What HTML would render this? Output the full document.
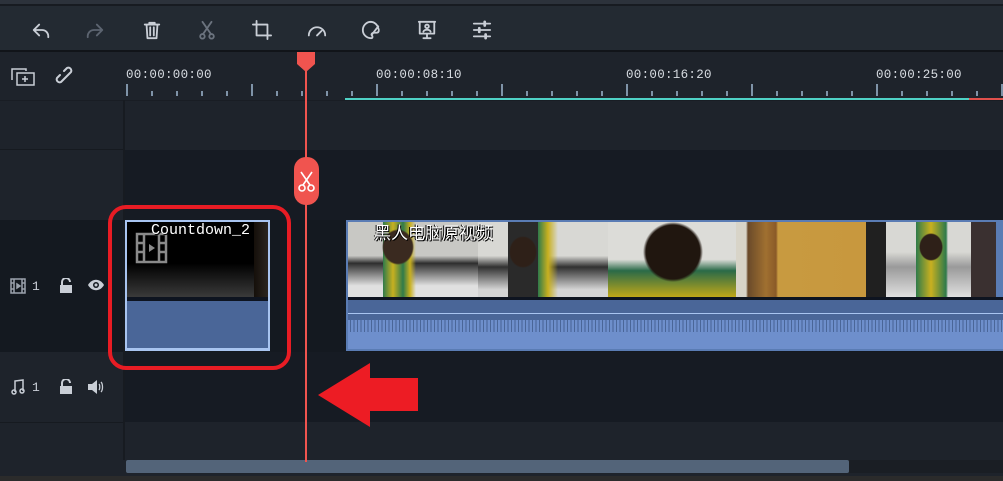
<!DOCTYPE html>
<html><head><meta charset="utf-8"><style>
*{margin:0;padding:0;box-sizing:border-box}
body{width:1003px;height:481px;overflow:hidden;background:#1e232b;position:relative;font-family:"Liberation Mono","Noto Sans CJK SC",monospace}
.a{position:absolute}
.tb svg{position:absolute;top:14px;width:20px;height:20px;fill:none;stroke:#c9ced6;stroke-width:2;stroke-linecap:round;stroke-linejoin:round}
.lbl{position:absolute;top:68px;color:#d8dce2;font-size:12.5px;letter-spacing:0.3px}
.tk{position:absolute;width:2px;background:#7f93a8}
.thumb{position:absolute;top:0;height:75px;width:130px}
</style></head><body>
<div class="a" style="left:0;top:0;width:1003px;height:4px;background:#2c323b"></div>
<div class="a" style="left:0;top:4px;width:1003px;height:2px;background:#171b21"></div>
<div class="a tb" style="left:0;top:6px;width:1003px;height:44px;background:#232a32">
<svg style="left:31px" viewBox="0 0 22 22"><path d="M9 5L3 11l6 6M3 11h9c4 0 7 3 7 7v1"/></svg>
<svg style="left:85px;stroke:#5c6470" viewBox="0 0 22 22"><path d="M13 5l6 6-6 6M19 11h-9c-4 0-7 3-7 7v1"/></svg>
<svg style="left:142px" viewBox="0 0 22 22"><path d="M3 5h16M8 5V3h6v2M5 5l1 15h10l1-15M9 8v9M13 8v9"/></svg>
<svg style="left:197px;stroke:#6b737e" viewBox="0 0 22 22"><path d="M6 2l9 13M16 2L7 15"/><circle cx="6" cy="18" r="2.5"/><circle cx="16" cy="18" r="2.5"/></svg>
<svg style="left:252px" viewBox="0 0 22 22"><path d="M5 1v16h16M1 5h16v16"/></svg>
<svg style="left:307px" viewBox="0 0 22 22"><path d="M2 17a9 9 0 0 1 18 0M11 17l5-5"/></svg>
<svg style="left:361px" viewBox="0 0 22 22"><path d="M11 2a9 9 0 1 0 0 18c2 0 2-2 1-3s0-3 2-3h3c3 0 3-3 2-5A9 9 0 0 0 11 2z"/><path d="M12 16l7-9"/></svg>
<svg style="left:417px" viewBox="0 0 22 22"><path d="M2 2h18M3 2v13h16V2M11 15v5M7 20h8"/><circle cx="11" cy="7" r="2"/><path d="M7 13c1-3 7-3 8 0"/></svg>
<svg style="left:472px" viewBox="0 0 22 22"><path d="M2 4h18M2 11h18M2 18h18"/><path d="M14 2v4M8 9v4M15 16v4" stroke-width="3"/></svg>
</div>
<div class="a" style="left:0;top:50px;width:1003px;height:2px;background:#111419"></div>
<svg class="a" style="left:11px;top:66px" width="26" height="22" viewBox="0 0 26 22" fill="none" stroke="#c9ced6" stroke-width="1.5"><path d="M1 14V3h14v2"/><rect x="6" y="7" width="17" height="12"/><path d="M14 10v6M11 13h6"/></svg>
<svg class="a" style="left:55px;top:66px" width="22" height="22" viewBox="0 0 22 22" fill="none" stroke="#c9ced6" stroke-width="2" stroke-linecap="round"><path d="M9 13l-3 3a3 3 0 0 1-4-4l3-3M13 9l3-3a3 3 0 0 0-4-4l-3 3M8 14l6-6"/></svg>
<div class="lbl" style="left:126px">00:00:00:00</div>
<div class="lbl" style="left:376px">00:00:08:10</div>
<div class="lbl" style="left:626px">00:00:16:20</div>
<div class="lbl" style="left:876px">00:00:25:00</div>
<div id="ticks"></div>
<div class="a" style="left:345px;top:98px;width:658px;height:3px;background:#4fd1c5"></div>
<div class="a" style="left:969px;top:98px;width:34px;height:2px;background:#e0504c"></div>
<div class="a" style="left:0;top:100px;width:1003px;height:1px;background:#191d24"></div>
<div class="a" style="left:0;top:149px;width:124px;height:1px;background:#161a20"></div>
<div class="a" style="left:124px;top:150px;width:879px;height:70px;background:#161b23"></div>
<div class="a" style="left:0;top:220px;width:1003px;height:132px;background:#141920"></div>
<div class="a" style="left:124px;top:352px;width:879px;height:70px;background:#161b23"></div>
<div class="a" style="left:0;top:422px;width:124px;height:1px;background:#161a20"></div>
<div class="a" style="left:123px;top:100px;width:2px;height:360px;background:#171b21"></div>
<svg class="a" style="left:10px;top:278px" width="16" height="16" viewBox="0 0 16 16" fill="none" stroke="#9ba3ad" stroke-width="1.5"><rect x="1" y="1" width="14" height="14"/><path d="M4 1v14M12 1v14M1 5h3M1 11h3M12 5h3M12 11h3"/><path d="M7 6l3 2-3 2z" fill="#9ba3ad"/></svg>
<div class="a" style="left:32px;top:279px;color:#c9ced6;font-size:13px">1</div>
<svg class="a" style="left:59px;top:278px" width="14" height="16" viewBox="0 0 14 16"><path d="M3 7V4a4 4 0 0 1 8 0" fill="none" stroke="#c9ced6" stroke-width="2"/><rect x="1" y="7" width="12" height="8" fill="#c9ced6"/></svg>
<svg class="a" style="left:87px;top:279px" width="18" height="12" viewBox="0 0 18 12"><path d="M1 6c4-7 12-7 16 0-4 7-12 7-16 0z" fill="#c9ced6"/><circle cx="9" cy="6" r="3" fill="#141920"/><circle cx="9" cy="6" r="1.5" fill="#c9ced6"/></svg>
<svg class="a" style="left:11px;top:379px" width="14" height="16" viewBox="0 0 14 16" fill="none" stroke="#c9ced6" stroke-width="1.5"><path d="M4 13V2l8-1v11"/><circle cx="3" cy="13" r="2"/><circle cx="11" cy="12" r="2"/></svg>
<div class="a" style="left:32px;top:380px;color:#c9ced6;font-size:13px">1</div>
<svg class="a" style="left:59px;top:379px" width="14" height="16" viewBox="0 0 14 16"><path d="M3 7V4a4 4 0 0 1 8 0" fill="none" stroke="#c9ced6" stroke-width="2"/><rect x="1" y="7" width="12" height="8" fill="#c9ced6"/></svg>
<svg class="a" style="left:87px;top:379px" width="18" height="16" viewBox="0 0 18 16"><path d="M1 5h4l5-4v14l-5-4H1z" fill="#c9ced6"/><path d="M12 5c1 1 1 5 0 6M14 3c2 2 2 8 0 10" fill="none" stroke="#c9ced6" stroke-width="1.3"/></svg>
<div class="a" style="left:125px;top:220px;width:145px;height:131px;background:#a8c4f0"></div>
<div class="a" style="left:127px;top:222px;width:141px;height:75px;background:linear-gradient(#000 55%,#3a3a3a)"></div>
<div class="a" style="left:254px;top:222px;width:14px;height:75px;background:linear-gradient(90deg,#150f0a,#2a2520)"></div>
<div class="a" style="left:127px;top:297px;width:141px;height:4px;background:#0e1420"></div>
<div class="a" style="left:127px;top:301px;width:141px;height:47px;background:#4a6698"></div>
<svg class="a" style="left:135px;top:232px" width="33" height="32" viewBox="0 0 33 32" fill="none" stroke="#8a8a8a" stroke-width="2.5"><rect x="2" y="2" width="29" height="28"/><path d="M9 2v28M24 2v28M2 11h7M2 20h7M24 11h7M24 20h7"/><path d="M14 12l6 4-6 4z" fill="#8a8a8a" stroke="none"/></svg>
<div class="a" style="left:151px;top:222px;color:#fff;font-size:15px;text-shadow:1px 1px 0 #000">Countdown_2</div>
<div class="a" style="left:346px;top:220px;width:657px;height:131px;background:#5a7cb4"></div>
<div class="a" style="left:348px;top:222px;width:655px;height:75px;overflow:hidden">
 <div class="thumb" style="left:0;background:radial-gradient(ellipse 16px 18px at 50px 25px,#3a2a20 90%,transparent),linear-gradient(90deg,transparent 35px,#2f7a4a 35px,#c8b020 45px,#2f7a4a 55px,#c8b020 62px,transparent 68px),linear-gradient(#c8c8c4 45%,#2e2e2e 55%,#e0e0e0 85%)"></div>
 <div class="thumb" style="left:130px;background:radial-gradient(ellipse 14px 16px at 45px 30px,#2e2018 90%,transparent),linear-gradient(90deg,transparent 30px,#2a2a2a 30px,#2a2a2a 60px,#2f7a4a 60px,#c8b020 70px,transparent 80px),linear-gradient(#d8d8d4 45%,#303030 60%,#d4d4d4 90%)"></div>
 <div class="thumb" style="left:260px;background:radial-gradient(ellipse 30px 30px at 65px 30px,#20160f 90%,transparent),linear-gradient(#dcdcd8 50%,#2a6a48 65%,#c0a818)"></div>
 <div class="thumb" style="left:388px;background:linear-gradient(90deg,#d8d4c8 0 10px,#6a4a2a 12px,#a07030 30px,#8a5a28 40px,#c89a40 42px,#c8983e 130px)"></div>
 <div class="thumb" style="left:518px;background:radial-gradient(ellipse 12px 14px at 65px 25px,#2e2018 90%,transparent),linear-gradient(90deg,#202020 0 20px,transparent 20px,transparent 50px,#2f7a4a 50px,#c8b020 65px,#2f7a4a 80px,transparent 82px,transparent 105px,#3a3030 105px),linear-gradient(#d8d8d4 40%,#9a9a9a 60%,#e0e0e0)"></div>
</div>
<div class="a" style="left:374px;top:219px;color:#fff;font-size:17px;text-shadow:1px 1px 0 #000,-1px 0 0 #000">黑人电脑原视频</div>
<div class="a" style="left:348px;top:297px;width:655px;height:3px;background:#0e1420"></div>
<div class="a" style="left:348px;top:300px;width:655px;height:49px;background:#4a6698"></div>
<div class="a" style="left:348px;top:313px;width:655px;height:1px;background:#a8c4f0"></div>
<div class="a" style="left:348px;top:320px;width:655px;height:14px;background:repeating-linear-gradient(90deg,#6e8fcc 0 2px,#4a6698 2px 3px,#6e8fcc 3px 5px,#5a78b0 5px 7px)"></div>
<div class="a" style="left:348px;top:332px;width:655px;height:17px;background:#6e8fcc"></div>
<div class="a" style="left:126px;top:460px;width:723px;height:13px;background:#536479;border-radius:2px"></div>
<div class="a" style="left:849px;top:460px;width:154px;height:13px;background:#1a1e24"></div>
<div class="a" style="left:0;top:476px;width:1003px;height:5px;background:#2b2b2b"></div>
<div class="a" style="left:108px;top:205px;width:183px;height:165px;border:4px solid #e81c24;border-radius:18px"></div>
<svg class="a" style="left:316px;top:362px" width="104" height="66" viewBox="0 0 104 66"><path d="M2 33L54 1v15h48v33H54v16z" fill="#ed1c24"/></svg>
<div class="a" style="left:305px;top:52px;width:2px;height:410px;background:#f0544f"></div>
<svg class="a" style="left:297px;top:52px" width="18" height="20" viewBox="0 0 18 20"><path d="M0 0h18v12l-9 8-9-8z" fill="#f0544f"/></svg>
<div class="a" style="left:294px;top:157px;width:25px;height:48px;background:#f0544f;border-radius:12px"></div>
<svg class="a" style="left:297px;top:171px" width="19" height="22" viewBox="0 0 19 22" fill="none" stroke="#fff" stroke-width="1.6"><path d="M4 1l9 13M15 1L6 14"/><circle cx="5" cy="17" r="3"/><circle cx="14" cy="17" r="3"/></svg>
<script>
var h='';for(var i=0;i<36;i++){var x=126+i*25;if(x>1003)break;var m=i%5==0;h+='<div class="tk" style="left:'+x+'px;top:'+(m?84:91)+'px;height:'+(m?12:5)+'px"></div>';}
document.getElementById('ticks').innerHTML=h;
</script>
</body></html>
